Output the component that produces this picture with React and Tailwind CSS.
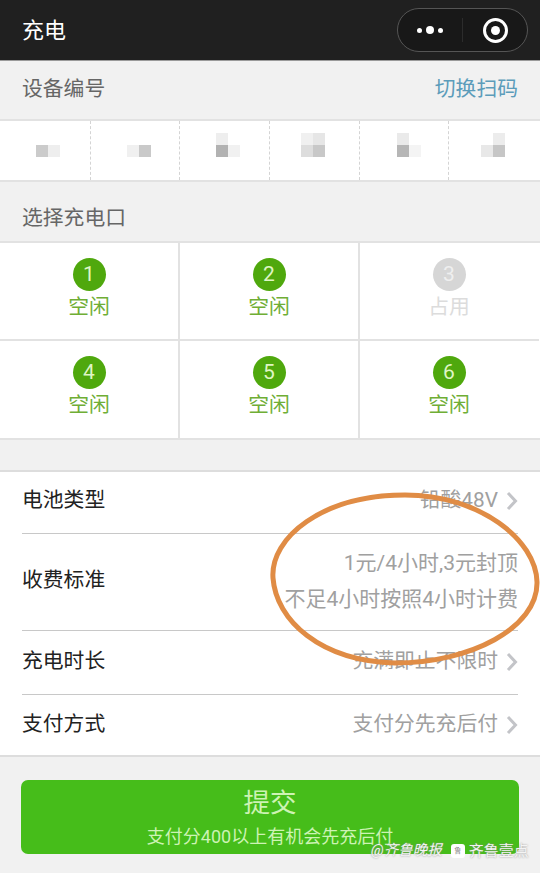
import React from 'react';

const cjk = "font-['Roboto','Noto_Sans_CJK_SC',sans-serif]";

// 打码的设备编号，每格是几块灰色马赛克
const codeCells = [
  { offset: 'translate-x-[3px]', blocks: ['bg-transparent', 'bg-transparent', 'bg-[#cbcbcb]', 'bg-[#eeeeee]'] },
  { offset: 'translate-x-[4px]', blocks: ['bg-transparent', 'bg-transparent', 'bg-[#f0f0f0]', 'bg-[#c9c9c9]'] },
  { offset: 'translate-x-[3px]', blocks: ['bg-[#eeeeee]', 'bg-transparent', 'bg-[#b2b2b2]', 'bg-[#f1f1f1]'] },
  { offset: 'translate-x-[-1px]', blocks: ['bg-[#f0f0f0]', 'bg-[#e6e6e6]', 'bg-[#dddddd]', 'bg-[#c8c8c8]'] },
  { offset: 'translate-x-[5px]', blocks: ['bg-[#eaeaea]', 'bg-transparent', 'bg-[#b6b6b6]', 'bg-[#f4f4f4]'] },
  { offset: 'translate-x-[-1px]', blocks: ['bg-transparent', 'bg-[#ececec]', 'bg-[#e8e8e8]', 'bg-[#c6c6c6]'] },
];

const ports = [
  { id: 1, free: true },
  { id: 2, free: true },
  { id: 3, free: false },
  { id: 4, free: true },
  { id: 5, free: true },
  { id: 6, free: true },
];

const Chevron = () => (
  <svg width="12" height="20" viewBox="0 0 12 20" fill="none" className="ml-[8px] shrink-0">
    <path d="M2 2l7.5 8L2 18" stroke="#c3c4c8" strokeWidth="3" />
  </svg>
);

const Row = ({ label, value, className = '' }) => (
  <div className={`mx-[22px] flex items-center justify-between ${className}`}>
    <span className="text-[20.8px] text-[#222222]">{label}</span>
    <span className="flex items-center text-[20.8px] text-[#a0a0a0]">
      {value}
      <Chevron />
    </span>
  </div>
);

export default function App() {
  return (
    <div className={`relative h-[873px] w-[540px] overflow-hidden bg-[#f1f1f1] ${cjk}`}>
      {/* 顶部导航 */}
      <div className="flex h-[61px] items-center justify-between border-b border-[#9a9a9a] bg-[#202020] pl-[22px] pr-[12px]">
        <span className="text-[22px] text-white">充电</span>
        <div className="flex h-[44px] w-[131px] items-center rounded-full border border-[#555555] bg-[#181818]">
          <div className="flex flex-1 items-center justify-center gap-[4px]">
            <span className="h-[5px] w-[5px] rounded-full bg-white" />
            <span className="h-[8px] w-[8px] rounded-full bg-white" />
            <span className="h-[5px] w-[5px] rounded-full bg-white" />
          </div>
          <div className="h-[24px] w-px bg-[#2c2c2c]" />
          <div className="flex flex-1 items-center justify-center">
            <div className="flex h-[25px] w-[25px] items-center justify-center rounded-full border-[3.5px] border-white">
              <span className="h-[9px] w-[9px] rounded-full bg-white" />
            </div>
          </div>
        </div>
      </div>

      {/* 设备编号 */}
      <div className="flex h-[58px] items-center justify-between px-[22px]">
        <span className="text-[20.8px] text-[#666666]">设备编号</span>
        <span className="text-[20.8px] text-[#5c9cba]">切换扫码</span>
      </div>
      <div className="grid h-[63px] grid-cols-6 border-y-2 border-[#e2e2e2] bg-white px-[1px]">
        {codeCells.map((cell, i) => (
          <div
            key={i}
            className={`flex items-center justify-center ${i < 5 ? 'border-r border-dashed border-[#d4d4d4]' : ''}`}
          >
            <div className={`grid grid-cols-[12px_12px] auto-rows-[12px] translate-y-[-6px] blur-[0.6px] ${cell.offset}`}>
              {cell.blocks.map((bg, j) => (
                <span key={j} className={bg} />
              ))}
            </div>
          </div>
        ))}
      </div>

      {/* 充电口 */}
      <div className="flex h-[59px] items-center px-[22px] pt-[14px]">
        <span className="text-[20.8px] text-[#666666]">选择充电口</span>
      </div>
      <div className="grid h-[199px] grid-cols-3 grid-rows-2 border-y-2 border-[#e2e2e2] bg-white">
        {ports.map((port, i) => (
          <div
            key={port.id}
            className={`flex flex-col items-center pt-[15px] ${i % 3 < 2 ? 'border-r-2 border-[#e2e2e2]' : '-translate-x-px'} ${i < 3 ? 'border-b-2 border-[#e2e2e2]' : ''}`}
          >
            <span
              className={`flex h-[33px] w-[33px] items-center justify-center rounded-full text-[21px] leading-none ${
                port.free ? 'bg-[#4fa80d] text-[#dff5c4]' : 'bg-[#d6d6d6] text-[#efefef]'
              }`}
            >
              {port.id}
            </span>
            <span className={`mt-[1px] text-[20.8px] leading-[30px] ${port.free ? 'text-[#6fae35]' : 'text-[#dcdcdc]'}`}>
              {port.free ? '空闲' : '占用'}
            </span>
          </div>
        ))}
      </div>

      {/* 信息列表 */}
      <div className="mt-[30px] flex h-[287px] flex-col border-y-2 border-[#dddddd] bg-white">
        <Row label="电池类型" value="铅酸48V" className="h-[62px] border-b border-[#c8c8c8] pb-[3px]" />
        <div className="mx-[22px] flex h-[97px] items-center justify-between border-b border-[#c8c8c8] pb-[2px]">
          <span className="text-[20.8px] text-[#222222]">收费标准</span>
          <div className="text-right text-[21px] leading-[36px] text-[#a0a0a0]">
            <div>1元/4小时,3元封顶</div>
            <div>不足4小时按照4小时计费</div>
          </div>
        </div>
        <Row label="充电时长" value="充满即止不限时" className="h-[64px] border-b border-[#c8c8c8] pb-[2px]" />
        <Row label="支付方式" value="支付分先充后付" className="flex-1" />
      </div>

      {/* 提交按钮 */}
      <div className="px-[21px] pt-[23px]">
        <div className="flex h-[74px] flex-col items-center rounded-[7px] bg-[#46bd1a] text-[#cdf3b4]">
          <span className="text-[26.5px] leading-[46px]">提交</span>
          <span className="text-[18px] leading-[22px]">支付分400以上有机会先充后付</span>
        </div>
      </div>

      {/* 手绘圈注 */}
      <svg width="540" height="873" viewBox="0 0 540 873" fill="none" className="absolute left-0 top-0">
        <path
          d="M273 578C270 538 322 495 405 495C480 495 536 540 537 582C538 628 470 663 395 663C320 661 276 620 273 578Z"
          stroke="#e08c45"
          strokeWidth="5"
        />
      </svg>

      {/* 水印 */}
      <div className="absolute left-[371px] top-[840px] flex items-center whitespace-nowrap text-[#f4f4f4] [text-shadow:0_0_2px_#8a8a8a]">
        <span className="text-[14.5px] italic leading-[22px]">@齐鲁晚报</span>
        <span className="ml-[9px] flex h-[14px] w-[14px] items-center justify-center rounded-[3px] bg-white text-[7px] leading-none text-[#777777] [text-shadow:none]">
          鲁
        </span>
        <span className="ml-[4px] text-[15px] leading-[22px]">齐鲁壹点</span>
      </div>
    </div>
  );
}
